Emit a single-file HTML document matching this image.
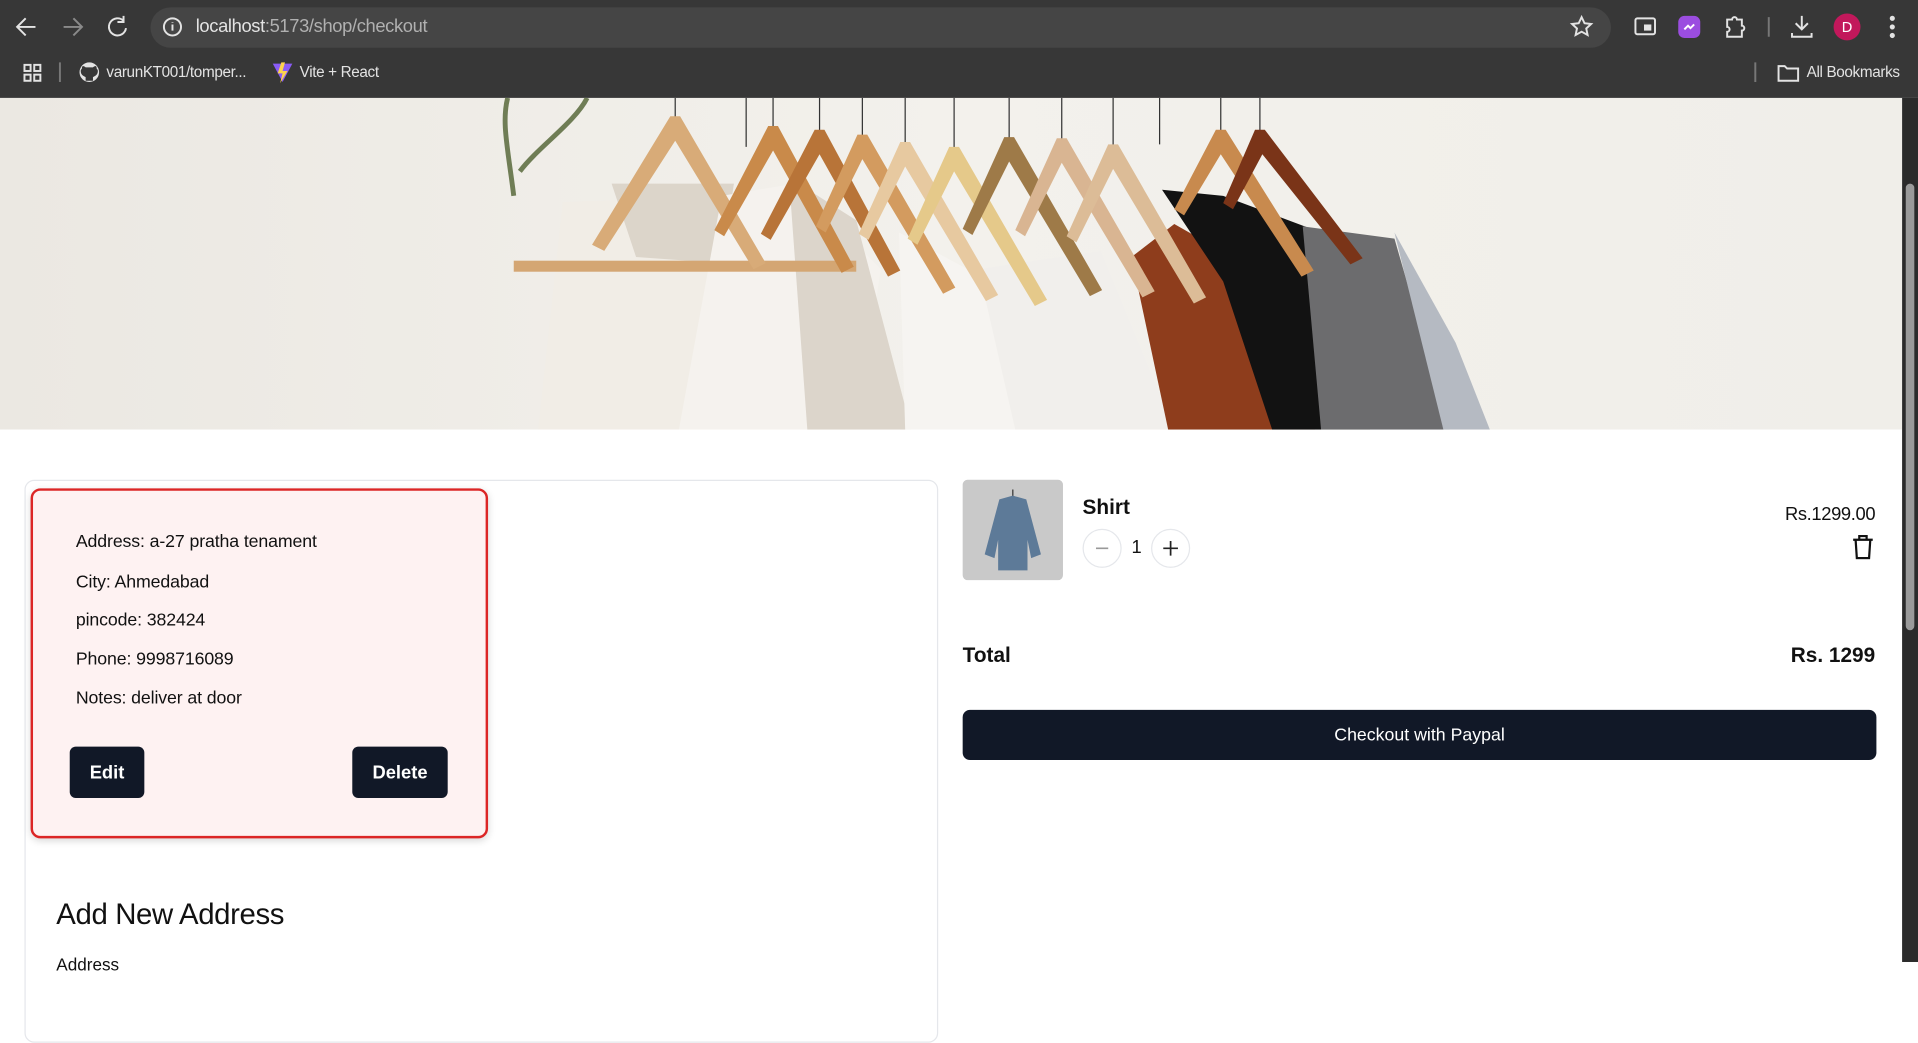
<!DOCTYPE html>
<html><head><meta charset="utf-8"><style>
*{box-sizing:border-box;margin:0;padding:0}
html,body{width:1918px;height:962px;overflow:hidden;background:#fff}
#s{position:absolute;left:0;top:0;width:1568px;height:786px;transform:scale(1.22321,1.2239);transform-origin:0 0;font-family:"Liberation Sans",sans-serif;color:#111}
.a{position:absolute}
.t{font-size:14.5px;color:#111;letter-spacing:-0.1px}
.btn{position:absolute;background:#111827;color:#fff;border-radius:5px;font-weight:bold;font-size:15px;display:flex;align-items:center;justify-content:center}
.ci{position:absolute;width:32px;height:32px;border:1px solid #e5e7eb;border-radius:50%;display:flex;align-items:center;justify-content:center}
</style></head><body><div id="s">
<div class="a" style="left:0;top:0;width:1568px;height:80px;background:#373737"></div>
<div class="a" style="left:123px;top:6px;width:1194px;height:33px;border-radius:17px;background:#454545"></div>
<svg class="a" style="left:0;top:0" width="1568" height="80" fill="none" stroke="#e3e3e3" stroke-width="1.6">
<path d="M29 22H15M21 15l-7 7 7 7"/>
<path d="M52 22h14M60 15l7 7-7 7" stroke="#8a8a8a"/>
<path d="M101 17a7 7 0 1 0 2 6M101 13v5h-5"/>
<circle cx="141" cy="22" r="7"/><path d="M141 20v5M141 18v.5"/>
<path d="M1293 14l2.4 5 5.4.6-4 3.7 1.1 5.3-4.9-2.7-4.9 2.7 1.1-5.3-4-3.7 5.4-.6z"/>
<rect x="1337" y="15" width="16" height="13" rx="1.5"/><rect x="1344" y="20" width="6" height="5" fill="#e3e3e3" stroke="none"/>
<rect x="1372" y="13" width="18" height="18" rx="5" fill="#9b4de0" stroke="none"/><path d="M1377 24l3-3 2 2 3-3" stroke="#fff"/>
<path d="M1412 16h4a2 2 0 0 1 4 0h4v5a2 2 0 0 1 0 4v5h-12v-4a2 2 0 0 0 0-4z"/>
<path d="M1446 14v16" stroke="#777"/>
<path d="M1473 13v11M1468 19l5 5 5-5M1465 27v3h16v-3"/>
<circle cx="1547" cy="15" r="1.3" fill="#e3e3e3"/><circle cx="1547" cy="22" r="1.3" fill="#e3e3e3"/><circle cx="1547" cy="29" r="1.3" fill="#e3e3e3"/>
<rect x="20" y="53" width="5" height="5"/><rect x="28" y="53" width="5" height="5"/><rect x="20" y="61" width="5" height="5"/><rect x="28" y="61" width="5" height="5"/>
<path d="M49 51v16" stroke="#777"/>
<path d="M1435 51v16" stroke="#777"/>
<path d="M1454 54h5l2 2h9v10h-16z"/>
<circle cx="73" cy="59" r="8" fill="#e3e3e3" stroke="none"/><path d="M70 66v-3c-2-1-4-2-4-5 0-1 1-2 1-2 0-1 0-2 1-2 1 0 2 1 2 1h6s1-1 2-1c1 0 1 1 1 2 0 0 1 1 1 2 0 3-2 4-4 5v3" fill="#373737" stroke="none"/>
<path d="M223 52l8 15 8-15z" fill="#8a5cf6" stroke="none"/><path d="M230 51l-3 9h4l-2 8 6-10h-4l2-7z" fill="#fcd34d" stroke="none"/>
</svg>
<div class="a" style="left:1499px;top:11px;width:22px;height:22px;border-radius:50%;background:#c2185b;color:#fff;font-size:12px;display:flex;align-items:center;justify-content:center">D</div>
<div class="a" style="left:160px;top:13px;font-size:15px;color:#e3e3e3;letter-spacing:-0.3px">localhost<span style="color:#b0b0b0">:5173/shop/checkout</span></div>
<div class="a" style="left:87px;top:52px;font-size:12.5px;color:#e3e3e3;letter-spacing:-0.3px">varunKT001/tomper...</div>
<div class="a" style="left:245px;top:52px;font-size:12.5px;color:#e3e3e3;letter-spacing:-0.3px">Vite + React</div>
<div class="a" style="left:1477px;top:52px;font-size:12.5px;color:#e3e3e3;letter-spacing:-0.3px">All Bookmarks</div>
<div class="a" style="left:1555px;top:80px;width:13px;height:706px;background:#2b2b2b"></div>
<div class="a" style="left:1558px;top:150px;width:7px;height:365px;border-radius:4px;background:#9a9a9a"></div>
<svg class="a" style="left:0;top:80px" width="1555" height="271" viewBox="0 0 1555 271" preserveAspectRatio="none">
<defs><linearGradient id="bg" x1="0" x2="1"><stop offset="0" stop-color="#ebe8e2"/><stop offset=".5" stop-color="#f3f1ec"/><stop offset="1" stop-color="#f0eee9"/></linearGradient></defs>
<rect width="1555" height="271" fill="url(#bg)"/>
<path d="M415 0c-5 20 0 40 5 80M480 0c-10 20-40 40-55 60" stroke="#6f7d55" stroke-width="4" fill="none"/>
<g stroke="#333" stroke-width="1"><path d="M552 0v18M610 0v40M632 0v25M670 0v28M705 0v32M740 0v38M780 0v42M825 0v33M868 0v35M910 0v40M948 0v38M998 0v28M1030 0v28"/></g>
<polygon points="460,85 600,80 640,271 440,271" fill="#f1ede6"/>
<polygon points="500,70 600,70 590,135 520,130" fill="#dcd5ca"/>
<polygon points="590,80 650,70 720,140 700,271 555,271" fill="#f5f2ee"/>
<polygon points="645,65 700,100 745,271 660,271" fill="#dcd5cb"/>
<polygon points="735,110 810,150 840,271 740,271" fill="#f6f4f1"/>
<polygon points="800,140 900,125 960,271 830,271" fill="#f1efec"/>
<polygon points="925,130 960,103 1060,160 1075,271 955,271" fill="#8e3d1c"/>
<polygon points="950,75 1000,80 1080,110 1120,271 1040,271 1000,150" fill="#121212"/>
<polygon points="1065,105 1140,115 1185,271 1080,271" fill="#6c6c6e"/>
<polygon points="1140,110 1190,200 1218,271 1180,271" fill="#b5bac2"/>
<rect x="420" y="133" width="280" height="9" fill="#d4a673"/>
<g>
<path d="M548 15h8l70 120-10 5-64-105-58 90-10-5z" fill="#d8ab78"/>
<path d="M628 23h8l62 115-10 5-56-100-40 70-8-5z" fill="#c98a4a"/>
<path d="M666 26h8l62 115-10 5-56-100-40 70-8-5z" fill="#b87438"/>
<path d="M701 30h8l72 125-10 5-66-110-30 60-8-5z" fill="#d39b5f"/>
<path d="M736 36h8l72 125-10 5-66-110-30 60-8-5z" fill="#e7c9a0"/>
<path d="M776 40h8l72 125-10 5-66-110-30 60-8-5z" fill="#e5c98a"/>
<path d="M821 32h8l72 125-10 5-66-110-30 60-8-5z" fill="#9e7a48"/>
<path d="M864 33h8l72 125-10 5-66-110-30 60-8-5z" fill="#d9b592"/>
<path d="M906 38h8l72 125-10 5-66-110-30 60-8-5z" fill="#dcbc97"/>
<path d="M994 26h8l72 115-10 5-66-100-30 50-8-5z" fill="#c88a4e"/>
<path d="M1026 26h8l80 105-10 5-72-90-24 45-8-5z" fill="#7a3418"/>
</g>
</svg>
<div class="a" style="left:20px;top:392px;width:747px;height:460px;border:1px solid #e5e7eb;border-radius:8px"></div>
<div class="a" style="left:25px;top:399px;width:374px;height:286px;border:2px solid #dc2626;border-radius:8px;background:#fef2f2;box-shadow:0 2px 6px rgba(0,0,0,.15)"></div>
<div class="a t" style="left:62px;top:435px">Address: a-27 pratha tenament</div>
<div class="a t" style="left:62px;top:468px">City: Ahmedabad</div>
<div class="a t" style="left:62px;top:499px">pincode: 382424</div>
<div class="a t" style="left:62px;top:531px">Phone: 9998716089</div>
<div class="a t" style="left:62px;top:563px">Notes: deliver at door</div>
<div class="btn" style="left:57px;top:610px;width:61px;height:42px">Edit</div>
<div class="btn" style="left:288px;top:610px;width:78px;height:42px">Delete</div>
<div class="a" style="left:46px;top:734px;font-size:24px;color:#111;letter-spacing:-0.3px">Add New Address</div>
<div class="a" style="left:46px;top:780px;font-size:14px;color:#111">Address</div>
<div class="a" style="left:787px;top:392px;width:82px;height:82px;border-radius:4px;background:#c9c9c9;overflow:hidden">
<svg width="82" height="82"><path d="M41 8v6" stroke="#333"/><path d="M30 16l11-3 11 3 12 45-8 3-3-15v25H29V49l-3 15-8-3z" fill="#5d7a98"/></svg></div>
<div class="a" style="left:885px;top:405px;font-size:17px;font-weight:bold">Shirt</div>
<div class="ci" style="left:885px;top:432px"><svg width="14" height="14"><path d="M2 7h10" stroke="#999" stroke-width="1.4"/></svg></div>
<div class="a" style="left:925px;top:439px;font-size:15px">1</div>
<div class="ci" style="left:941px;top:432px"><svg width="14" height="14"><path d="M1 7h12M7 1v12" stroke="#222" stroke-width="1.4"/></svg></div>
<div class="a" style="left:1400px;top:412px;width:133px;text-align:right;font-size:15px;letter-spacing:-0.3px">Rs.1299.00</div>
<svg class="a" style="left:1514px;top:437px" width="18" height="20" fill="none" stroke="#111" stroke-width="1.8"><path d="M1 4h16M6 4V1h6v3M3 4l1 15h10l1-15"/></svg>
<div class="a" style="left:787px;top:526px;font-size:17px;font-weight:bold">Total</div>
<div class="a" style="left:1400px;top:526px;width:133px;text-align:right;font-size:17px;font-weight:bold">Rs. 1299</div>
<div class="btn" style="left:787px;top:580px;width:747px;height:41px;font-weight:normal;font-size:14.5px;border-radius:6px">Checkout with Paypal</div>
</div></body></html>
